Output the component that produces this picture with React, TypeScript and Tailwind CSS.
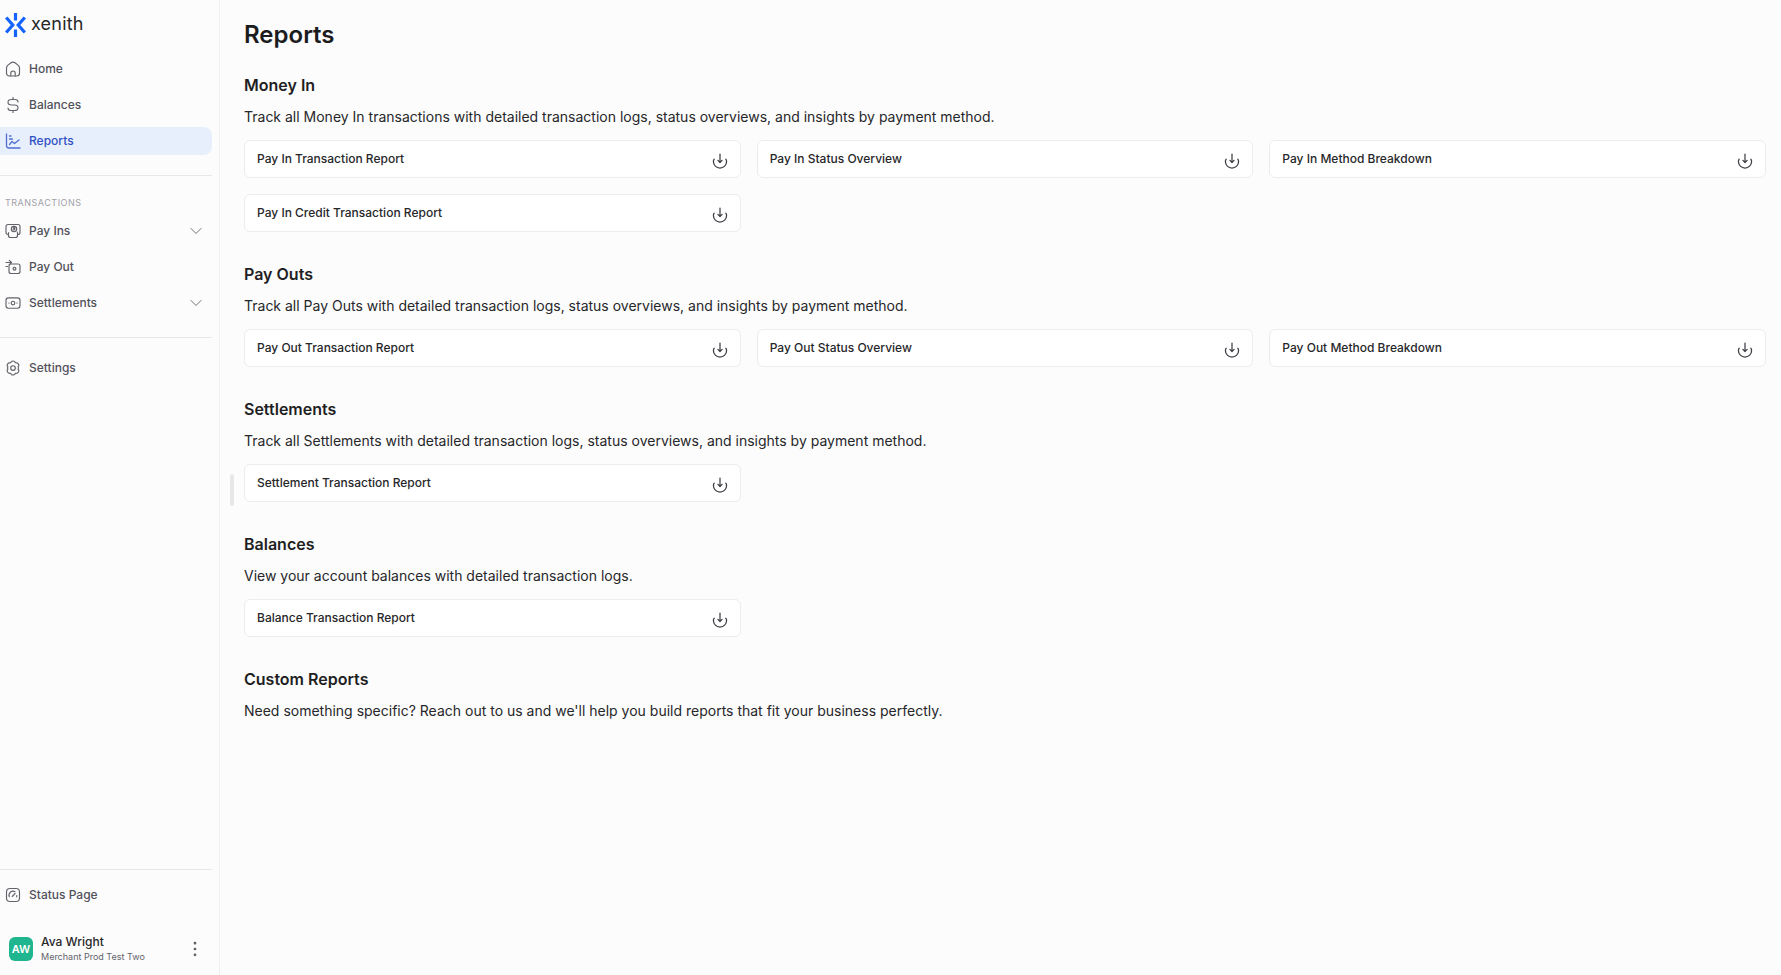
import React from "react";
import { ChevronDown, EllipsisVertical } from "lucide-react";

const ic = "w-[16px] h-[16px] shrink-0";
const sv = { fill: "none", stroke: "currentColor", strokeWidth: 1.15, strokeLinecap: "round" as const, strokeLinejoin: "round" as const, viewBox: "0 0 16 16" };

const HomeI = () => (<svg className={ic} {...sv}><path d="M1.500 7C1.500 5.500 2 5 3 4.100L6 1.800C7.200.900 8.800.900 10 1.800L13 4.100C14 5 14.500 5.500 14.500 7V12.300A2.700 2.700 0 0 1 11.800 15H4.200A2.700 2.700 0 0 1 1.500 12.300Z" /><path d="M5.800 15V12.200A2.200 2.200 0 0 1 10.200 12.200V15" /></svg>);
const DollarI = () => (<svg className={ic} {...sv}><path d="M13 5C13 3.500 11.500 2.500 10 2.500H6.500C4.300 2.500 3 3.800 3 5.300S4.300 8 6.500 8H9.500C11.700 8 13 9 13 10.700S11.700 13.500 9.500 13.500H6C4.500 13.500 3 12.500 3 11" /><path d="M8 .4V2.500M8 13.500V15.600" /></svg>);
const ChartI = () => (<svg className={ic} {...sv} strokeWidth={1.3}><path d="M1.500 1V12.500A2.500 2.500 0 0 0 4 15H15" /><path d="M4.500 11.500L7 8.500L9.500 10.500L14 7" /><path d="M4.500 3H6M4.500 6H7.500" /></svg>);
const PayInI = () => (<svg className={ic} {...sv}><path d="M3.500 11.500H3A2 2 0 0 1 1 9.500V3.500A2 2 0 0 1 3 1.500H13A2 2 0 0 1 15 3.500V9.500A2 2 0 0 1 13 11.500H12.500" /><path d="M3.500 9.500V12.500A2 2 0 0 0 5.500 14.500H10.500A2 2 0 0 0 12.500 12.500V9" /><circle cx="9" cy="6" r="2.700" /><path d="M8 6.800C8.800 7.300 10 6.800 9.700 6S8.200 5.500 8.300 4.900 9.400 4.500 10 4.900" /></svg>);
const PayOutI = () => (<svg className={ic} {...sv}><rect x="4" y="5" width="11" height="9.500" rx="2" /><circle cx="9.500" cy="9.700" r="1.400" /><path d="M1 3.500H6.500M4.300 1.300L6.500 3.500L4.300 5.700M1 7.500H2.500" /></svg>);
const SettleI = () => (<svg className={ic} {...sv}><rect x="1" y="2.800" width="14" height="10.400" rx="2.400" /><circle cx="8" cy="8" r="1.800" /><path d="M3.800 8H4.100M11.900 8H12.200" /></svg>);
const GearI = () => (<svg className={ic} {...sv}><path d="M6.400 1.500C7.400.900 8.600.900 9.600 1.500L10.400 2.600L12.300 2.900C13.300 3.500 13.900 4.500 13.900 5.600L13.100 6.800C13.500 7.500 13.500 8.500 13.100 9.200L13.900 10.400C13.900 11.500 13.300 12.500 12.300 13.100L10.400 13.400L9.600 14.500C8.600 15.100 7.400 15.100 6.400 14.500L5.600 13.400L3.700 13.100C2.700 12.500 2.100 11.500 2.100 10.400L2.900 9.200C2.500 8.500 2.500 7.500 2.900 6.800L2.100 5.600C2.100 4.500 2.700 3.500 3.700 2.900L5.600 2.600Z" /><circle cx="8" cy="8" r="2.300" /></svg>);
const StatusI = () => (<svg className={ic} {...sv}><rect x="1.500" y="1.500" width="13" height="13" rx="3.500" /><path d="M4.300 9.800A4 4 0 0 1 10 4.800" /><path d="M7.300 9.500L10 6.500" /><path d="M11.700 8.500V9.800" /></svg>);
const DownloadI = () => (
  <svg className="w-[16px] h-[16px] shrink-0 text-[#3f3f46] mt-[3px]" {...sv} strokeWidth={1.25}>
    <path d="M8 1V9.500M5.900 7.400L8 9.500L10.100 7.400" />
    <path d="M2.200 6.200C1.700 6.900 1.400 7.700 1.400 8.500A6.600 6.600 0 0 0 14.600 8.500C14.600 7.700 14.300 6.900 13.800 6.200" />
  </svg>
);
const Logo = () => (
  <svg className="w-[21px] h-[24px] shrink-0" viewBox="0 0 21 24" fill="none" stroke="#1463ff" strokeWidth={3.2}>
    <path d="M10.500 0V7.500M10.500 16.500V24" />
    <path d="M1.200 4.500L7.800 12L1.200 19.500M19.800 4.500L13.200 12L19.800 19.500" />
  </svg>
);

function Nav({ icon, label, active, chevron }: { icon: React.ReactNode; label: string; active?: boolean; chevron?: boolean }) {
  return (
    <div className={`h-[28px] w-[212px] rounded-r-[8px] flex items-center pl-[5px] pr-[6px] gap-[8px] text-[12px] font-medium ${active ? "bg-[#e8effc] text-[#2f4fc4]" : "text-[#52525b]"}`}>
      <span className={active ? "text-[#4f6fd0]" : "text-[#63636b]"}>{icon}</span>
      <span className="flex-1">{label}</span>
      {chevron && <ChevronDown className="w-[20px] h-[20px] text-[#71717a]" strokeWidth={1.2} />}
    </div>
  );
}

function Card({ label }: { label: string }) {
  return (
    <div className="h-[38px] bg-white border border-[#ececee] rounded-[6px] flex items-center justify-between pl-[12px] pr-[12px]">
      <span className="text-[12px] font-medium text-[#27272a] -mt-[1px]">{label}</span>
      <DownloadI />
    </div>
  );
}

function Section({ title, desc, cards }: { title: string; desc: string; cards?: string[] }) {
  return (
    <section className="mb-[28px]">
      <h2 className="text-[16px] leading-[28px] font-semibold text-[#1f1f23]">{title}</h2>
      <p className="text-[14px] leading-[24px] mt-[6px] text-[#27272a]">{desc}</p>
      {cards && (
        <div className="grid grid-cols-3 gap-x-[16px] gap-y-[16px] mt-[11px]">
          {cards.map((c) => (<Card key={c} label={c} />))}
        </div>
      )}
    </section>
  );
}

export default function App() {
  return (
    <div className="flex h-[975px] overflow-hidden bg-[#fcfcfc]" style={{ fontFamily: "Inter, 'Liberation Sans', sans-serif" }}>
      <aside className="w-[220px] shrink-0 border-r border-[#efeff1] flex flex-col bg-[#fcfcfc]">
        <div className="h-[50px] pl-[5px] pt-[13px] flex items-start gap-[5px]">
          <Logo />
          <span className="text-[18px] leading-[22px] text-[#27272a] tracking-[0.2px]">xenith</span>
        </div>
        <div className="flex flex-col gap-[8px] pt-[5px]">
          <Nav icon={<HomeI />} label="Home" />
          <Nav icon={<DollarI />} label="Balances" />
          <Nav icon={<ChartI />} label="Reports" active />
        </div>
        <div className="w-[212px] h-px bg-[#e8e8ea] mt-[20px]" />
        <div className="pl-[5px] mt-[21px] h-[12px] text-[9px] leading-[12px] font-normal tracking-[0.5px] text-[#a1a1aa]">TRANSACTIONS</div>
        <div className="flex flex-col gap-[8px] mt-[8px]">
          <Nav icon={<PayInI />} label="Pay Ins" chevron />
          <Nav icon={<PayOutI />} label="Pay Out" />
          <Nav icon={<SettleI />} label="Settlements" chevron />
        </div>
        <div className="w-[212px] h-px bg-[#e8e8ea] mt-[20px]" />
        <div className="mt-[16px]">
          <Nav icon={<GearI />} label="Settings" />
        </div>
        <div className="mt-auto w-[212px] h-px bg-[#e8e8ea]" />
        <div className="mt-[11px]">
          <Nav icon={<StatusI />} label="Status Page" />
        </div>
        <div className="flex items-center h-[24px] mt-[28px] mb-[14px] pl-[9px] pr-[7px] w-[212px]">
          <div className="w-[24px] h-[24px] rounded-[6px] bg-[#1fb58f] text-white text-[11px] font-semibold flex items-center justify-center">AW</div>
          <div className="ml-[8px] flex-1">
            <div className="text-[12px] leading-[16px] font-medium text-[#27272a]">Ava Wright</div>
            <div className="text-[9px] leading-[14px] text-[#63636b]">Merchant Prod Test Two</div>
          </div>
          <EllipsisVertical className="w-[20px] h-[20px] text-[#52525b]" strokeWidth={1.25} />
        </div>
      </aside>
      <main className="relative flex-1 pl-[24px] pr-[15px] pt-[17px]">
        <div className="absolute left-[10px] top-[474px] w-[4px] h-[32px] rounded-full bg-[#e7e7e9]" />
        <h1 className="text-[24px] leading-[36px] font-semibold text-[#1c1c1f] mb-[18px]">Reports</h1>
        <Section title="Money In" desc="Track all Money In transactions with detailed transaction logs, status overviews, and insights by payment method." cards={["Pay In Transaction Report", "Pay In Status Overview", "Pay In Method Breakdown", "Pay In Credit Transaction Report"]} />
        <Section title="Pay Outs" desc="Track all Pay Outs with detailed transaction logs, status overviews, and insights by payment method." cards={["Pay Out Transaction Report", "Pay Out Status Overview", "Pay Out Method Breakdown"]} />
        <Section title="Settlements" desc="Track all Settlements with detailed transaction logs, status overviews, and insights by payment method." cards={["Settlement Transaction Report"]} />
        <Section title="Balances" desc="View your account balances with detailed transaction logs." cards={["Balance Transaction Report"]} />
        <Section title="Custom Reports" desc="Need something specific? Reach out to us and we'll help you build reports that fit your business perfectly." />
      </main>
    </div>
  );
}
